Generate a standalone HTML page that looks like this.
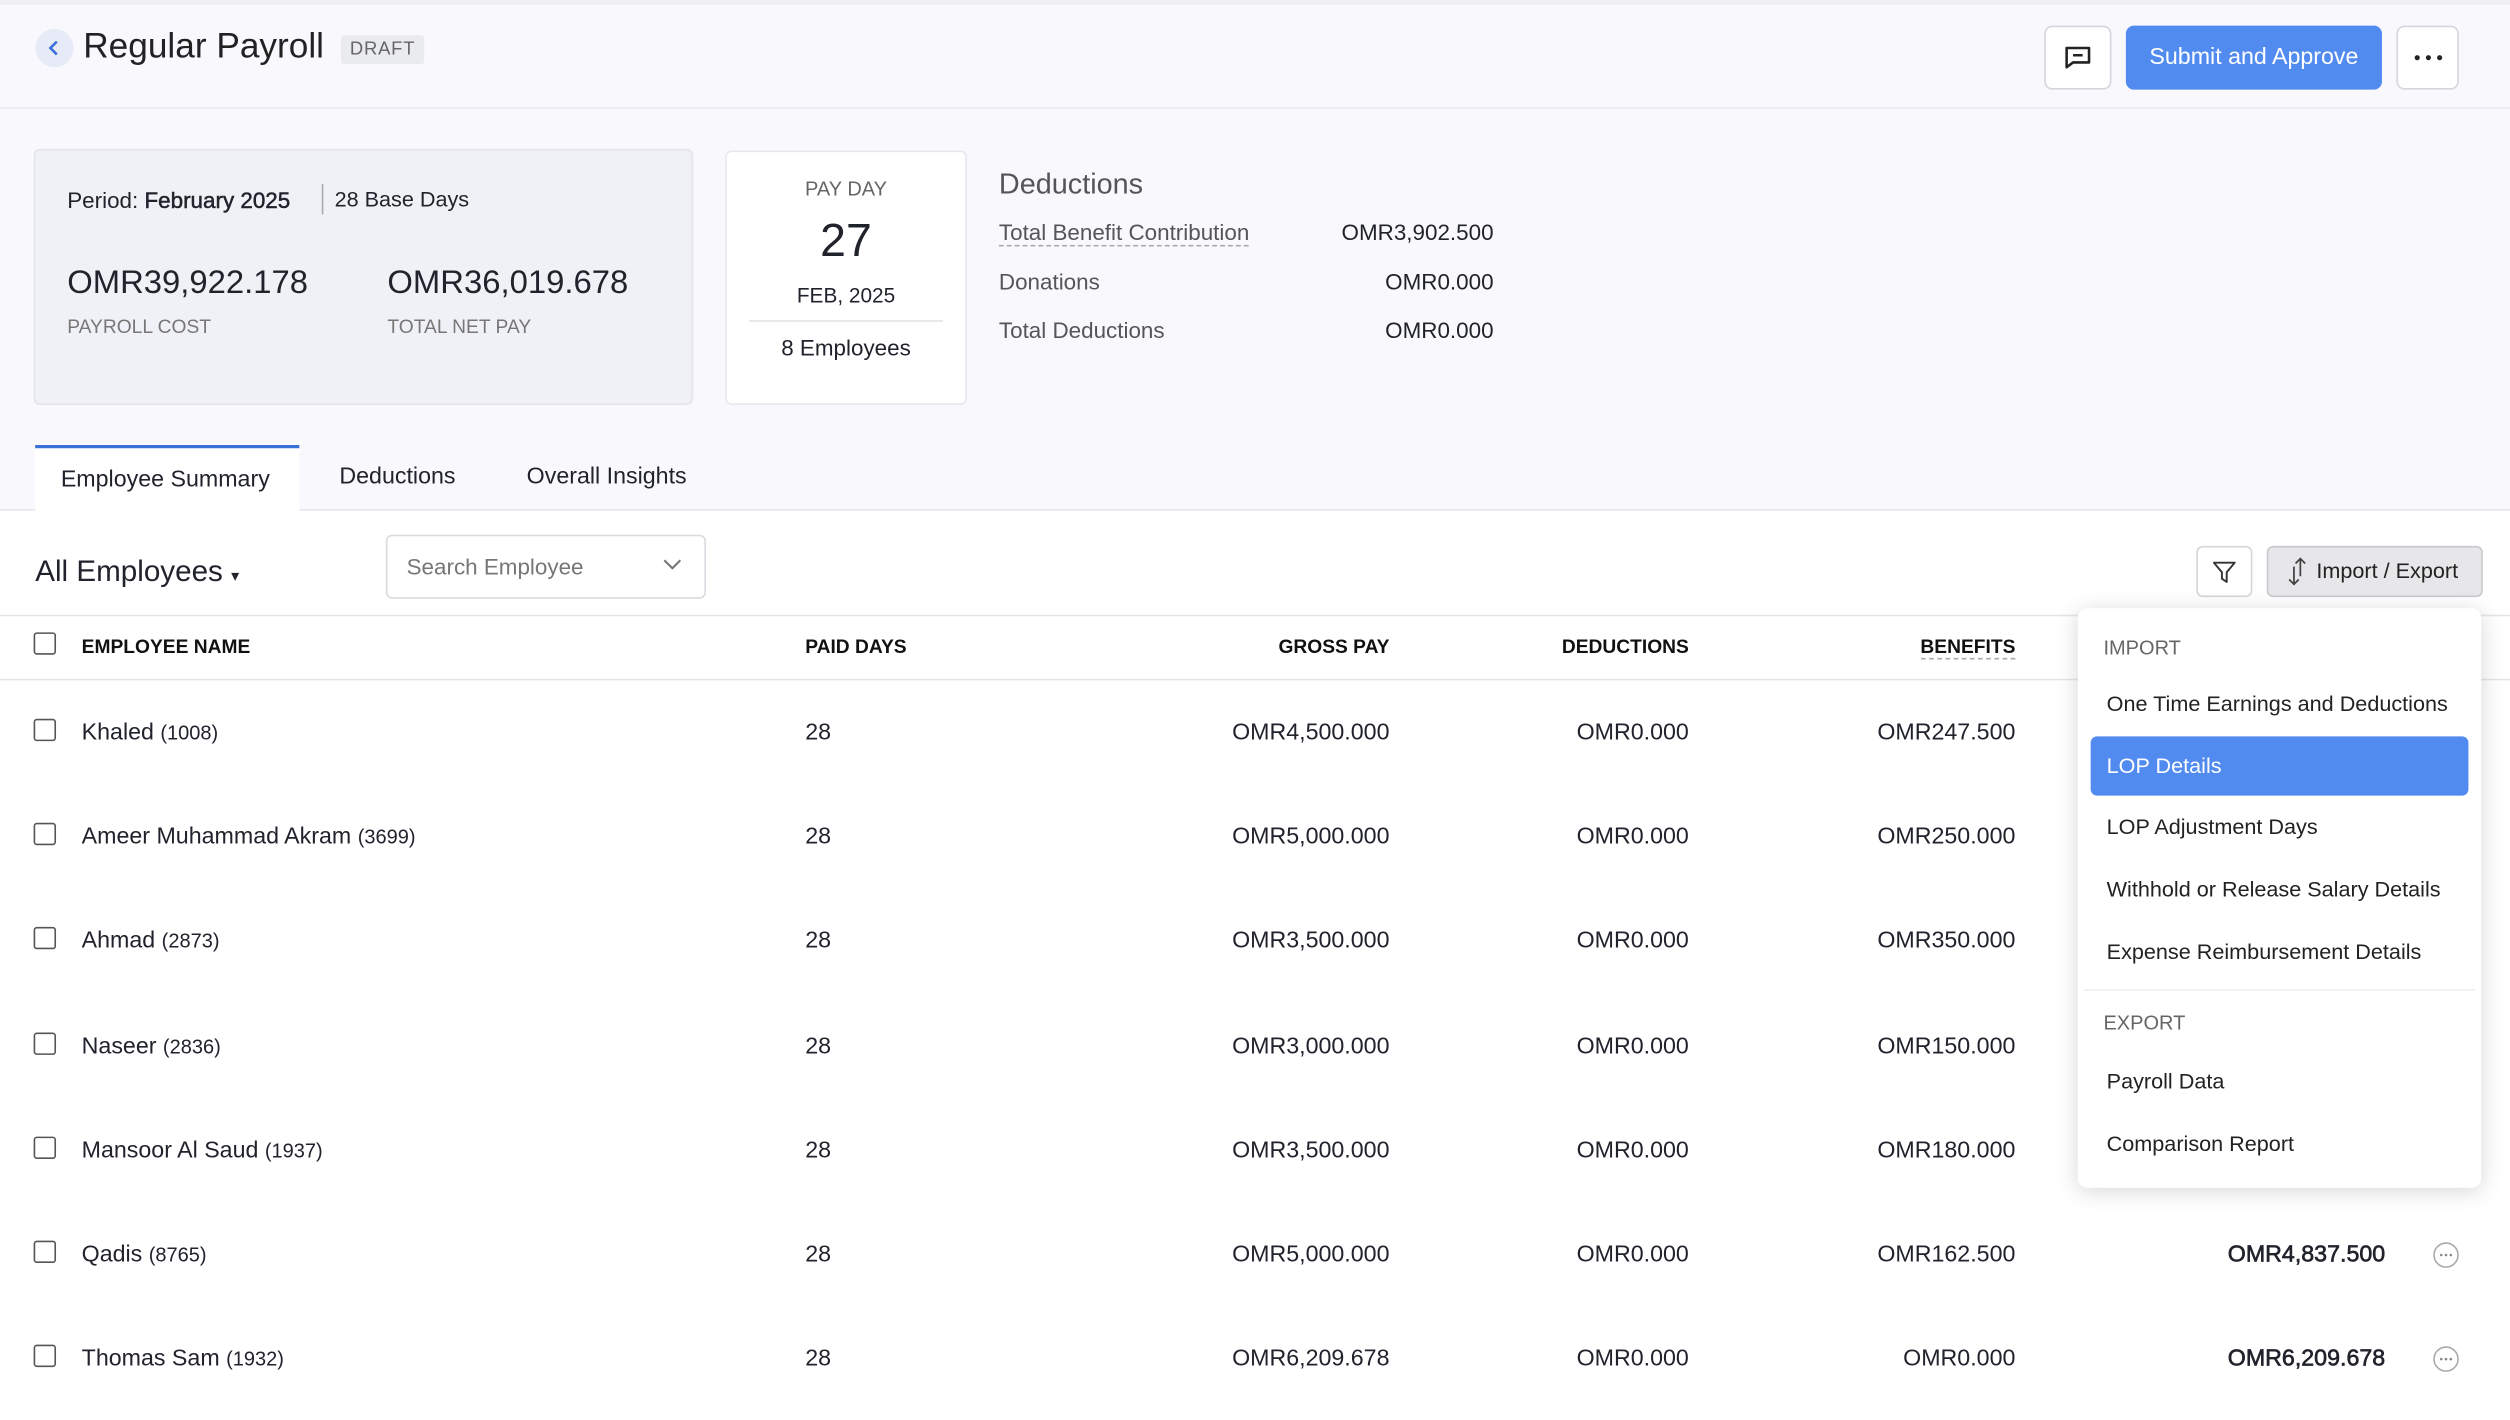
<!DOCTYPE html>
<html><head><meta charset="utf-8"><style>
*{margin:0;padding:0;box-sizing:border-box}
html,body{width:2510px;height:1420px;overflow:hidden;background:#fff}
#w{position:absolute;left:0;top:0;width:1568px;height:887px;transform:scale(1.6008);transform-origin:0 0;font-family:"Liberation Sans",sans-serif;color:#21232c;background:#fff}
.a{position:absolute;white-space:nowrap}
.r{text-align:right}
.cb{position:absolute;width:14px;height:14px;border:1.3px solid #555;border-radius:2px;background:#fff}
.n{font-size:14.5px}
.n small{font-size:12.5px}
.hd{font-size:12px;font-weight:bold;color:#111}
.mi{position:absolute;left:1316px;font-size:13.5px;color:#222}
</style></head><body><div id="w">
<div class="a" style="left:0;top:0;width:1568px;height:319px;background:#f9f9fd"></div>
<div class="a" style="left:0;top:0;width:1568px;height:3px;background:#eef0f4"></div>
<div class="a" style="left:0;top:67px;width:1568px;height:1px;background:#e8e9ef"></div>
<div class="a" style="left:22px;top:18px;width:24px;height:24px;border-radius:12px;background:#e6ebf7"></div>
<svg class="a" style="left:28px;top:24px" width="12" height="12"><path d="M7.5 2L3.5 6l4 4" fill="none" stroke="#3b6fd8" stroke-width="1.6"/></svg>
<div class="a" style="left:52px;top:16px;font-size:22px;color:#222">Regular Payroll</div>
<div class="a" style="left:213px;top:22px;width:52px;height:18px;background:#eaebef;border-radius:2px;font-size:11.5px;color:#666;text-align:center;line-height:18px;letter-spacing:.5px">DRAFT</div>
<div class="a" style="left:1277px;top:16px;width:42px;height:40px;border:1px solid #d4d6dc;border-radius:5px;background:#fff"></div>
<svg class="a" style="left:1289px;top:28px" width="18" height="16" viewBox="0 0 18 16"><path d="M2 2h14v9H6l-4 3z" fill="none" stroke="#222" stroke-width="1.6" stroke-linejoin="round"/><path d="M6 6.5h6" stroke="#222" stroke-width="1.6"/></svg>
<div class="a" style="left:1328px;top:16px;width:160px;height:40px;background:#528bf0;border-radius:5px;color:#fff;font-size:14.5px;text-align:center;line-height:40px">Submit and Approve</div>
<div class="a" style="left:1497px;top:16px;width:39px;height:40px;border:1px solid #d4d6dc;border-radius:5px;background:#fff"></div>
<svg class="a" style="left:1508px;top:34px" width="18" height="4"><circle cx="2" cy="2" r="1.6" fill="#222"/><circle cx="9" cy="2" r="1.6" fill="#222"/><circle cx="16" cy="2" r="1.6" fill="#222"/></svg>

<div class="a" style="left:21px;top:93px;width:412px;height:160px;background:#f0f1f6;border:1px solid #e4e5ea;border-radius:4px"></div>
<div class="a" style="left:42px;top:117px;font-size:14px">Period: <span style="font-weight:normal;-webkit-text-stroke:.3px #21232c">February 2025</span></div>
<div class="a" style="left:201px;top:115px;width:1px;height:19px;background:#aaa"></div>
<div class="a" style="left:209px;top:117px;font-size:13.5px">28 Base Days</div>
<div class="a" style="left:42px;top:165px;font-size:20.5px">OMR39,922.178</div>
<div class="a" style="left:242px;top:165px;font-size:20.5px">OMR36,019.678</div>
<div class="a" style="left:42px;top:197px;font-size:12px;color:#777">PAYROLL COST</div>
<div class="a" style="left:242px;top:197px;font-size:12px;color:#777">TOTAL NET PAY</div>

<div class="a" style="left:453px;top:94px;width:151px;height:159px;background:#fff;border:1px solid #e7e8ed;border-radius:4px"></div>
<div class="a" style="left:453px;top:111px;width:151px;text-align:center;font-size:12.5px;color:#666">PAY DAY</div>
<div class="a" style="left:453px;top:135px;width:151px;text-align:center;font-size:29px">27</div>
<div class="a" style="left:453px;top:177px;width:151px;text-align:center;font-size:13px">FEB, 2025</div>
<div class="a" style="left:468px;top:200px;width:121px;height:1px;background:#e2e3e7"></div>
<div class="a" style="left:453px;top:209px;width:151px;text-align:center;font-size:14px">8 Employees</div>

<div class="a" style="left:624px;top:105px;font-size:18px;color:#555">Deductions</div>
<div class="a" style="left:624px;top:137px;font-size:14px;color:#555;border-bottom:1px dashed #aaa">Total Benefit Contribution</div>
<div class="a" style="left:624px;top:168px;font-size:14px;color:#555">Donations</div>
<div class="a" style="left:624px;top:198px;font-size:14px;color:#555">Total Deductions</div>
<div class="a r" style="left:780px;width:153px;top:137px;font-size:14px">OMR3,902.500</div>
<div class="a r" style="left:780px;width:153px;top:168px;font-size:14px">OMR0.000</div>
<div class="a r" style="left:780px;width:153px;top:198px;font-size:14px">OMR0.000</div>

<div class="a" style="left:0;top:318px;width:1568px;height:1px;background:#e5e6eb"></div>
<div class="a" style="left:22px;top:278px;width:165px;height:42px;background:#fff;border-top:2.5px solid #3b6fd8"></div>
<div class="a" style="left:38px;top:292px;font-size:14.5px">Employee Summary</div>
<div class="a" style="left:212px;top:290px;font-size:14.5px">Deductions</div>
<div class="a" style="left:329px;top:290px;font-size:14.5px">Overall Insights</div>

<div class="a" style="left:22px;top:346px;font-size:18.5px">All Employees <span style="font-size:10px">▾</span></div>
<div class="a" style="left:241px;top:334px;width:200px;height:40px;border:1px solid #d9dbe0;border-radius:4px"></div>
<div class="a" style="left:254px;top:346px;font-size:14px;color:#777">Search Employee</div>
<svg class="a" style="left:414px;top:349px" width="12" height="8"><path d="M1 1l5 5 5-5" fill="none" stroke="#777" stroke-width="1.3"/></svg>
<div class="a" style="left:1372px;top:341px;width:35px;height:32px;border:1px solid #d4d6dc;border-radius:4px"></div>
<svg class="a" style="left:1382px;top:350px" width="15" height="15"><path d="M1 1.5h13l-5 6v6l-3-2v-4z" fill="none" stroke="#333" stroke-width="1.2" stroke-linejoin="round"/></svg>
<div class="a" style="left:1416px;top:341px;width:135px;height:32px;border:1px solid #c8c9cd;border-radius:4px;background:#e7e7e9"></div>
<svg class="a" style="left:1428px;top:348px" width="14" height="18"><path d="M5 17V6M2 14l3 3 3-3M9 1v11M6 4l3-3 3 3" fill="none" stroke="#444" stroke-width="1.1"/></svg>
<div class="a" style="left:1447px;top:349px;font-size:13.5px;color:#222">Import / Export</div>

<div class="a" style="left:0;top:384px;width:1568px;height:1px;background:#e5e6eb"></div>
<div class="a" style="left:0;top:424px;width:1568px;height:1px;background:#e5e6eb"></div>
<div class="cb" style="left:21px;top:395px"></div>
<div class="a hd" style="left:51px;top:397px">EMPLOYEE NAME</div>
<div class="a hd" style="left:503px;top:397px">PAID DAYS</div>
<div class="a hd r" style="left:700px;width:168px;top:397px">GROSS PAY</div>
<div class="a hd r" style="left:900px;width:155px;top:397px">DEDUCTIONS</div>
<div class="a hd r" style="left:1100px;width:159px;top:397px;"><span style="border-bottom:1px dashed #aaa">BENEFITS</span></div>

<div class="cb" style="left:21px;top:449px"></div><div class="a n" style="left:51px;top:450px">Khaled <small>(1008)</small></div><div class="a n" style="left:503px;top:450px">28</div><div class="a n r" style="left:700px;width:168px;top:450px">OMR4,500.000</div><div class="a n r" style="left:900px;width:155px;top:450px">OMR0.000</div><div class="a n r" style="left:1100px;width:159px;top:450px">OMR247.500</div>
<div class="cb" style="left:21px;top:514px"></div><div class="a n" style="left:51px;top:515px">Ameer Muhammad Akram <small>(3699)</small></div><div class="a n" style="left:503px;top:515px">28</div><div class="a n r" style="left:700px;width:168px;top:515px">OMR5,000.000</div><div class="a n r" style="left:900px;width:155px;top:515px">OMR0.000</div><div class="a n r" style="left:1100px;width:159px;top:515px">OMR250.000</div>
<div class="cb" style="left:21px;top:579px"></div><div class="a n" style="left:51px;top:580px">Ahmad <small>(2873)</small></div><div class="a n" style="left:503px;top:580px">28</div><div class="a n r" style="left:700px;width:168px;top:580px">OMR3,500.000</div><div class="a n r" style="left:900px;width:155px;top:580px">OMR0.000</div><div class="a n r" style="left:1100px;width:159px;top:580px">OMR350.000</div>
<div class="cb" style="left:21px;top:645px"></div><div class="a n" style="left:51px;top:646px">Naseer <small>(2836)</small></div><div class="a n" style="left:503px;top:646px">28</div><div class="a n r" style="left:700px;width:168px;top:646px">OMR3,000.000</div><div class="a n r" style="left:900px;width:155px;top:646px">OMR0.000</div><div class="a n r" style="left:1100px;width:159px;top:646px">OMR150.000</div>
<div class="cb" style="left:21px;top:710px"></div><div class="a n" style="left:51px;top:711px">Mansoor Al Saud <small>(1937)</small></div><div class="a n" style="left:503px;top:711px">28</div><div class="a n r" style="left:700px;width:168px;top:711px">OMR3,500.000</div><div class="a n r" style="left:900px;width:155px;top:711px">OMR0.000</div><div class="a n r" style="left:1100px;width:159px;top:711px">OMR180.000</div>
<div class="cb" style="left:21px;top:775px"></div><div class="a n" style="left:51px;top:776px">Qadis <small>(8765)</small></div><div class="a n" style="left:503px;top:776px">28</div><div class="a n r" style="left:700px;width:168px;top:776px">OMR5,000.000</div><div class="a n r" style="left:900px;width:155px;top:776px">OMR0.000</div><div class="a n r" style="left:1100px;width:159px;top:776px">OMR162.500</div>
<div class="a n r" style="left:1300px;width:190px;top:776px;-webkit-text-stroke:.4px #21232c">OMR4,837.500</div>
<svg class="a" style="left:1519px;top:775px" width="18" height="18"><circle cx="9" cy="9" r="7.5" fill="none" stroke="#aaa"/><circle cx="6" cy="9" r=".8" fill="#888"/><circle cx="9" cy="9" r=".8" fill="#888"/><circle cx="12" cy="9" r=".8" fill="#888"/></svg>
<div class="cb" style="left:21px;top:840px"></div><div class="a n" style="left:51px;top:841px">Thomas Sam <small>(1932)</small></div><div class="a n" style="left:503px;top:841px">28</div><div class="a n r" style="left:700px;width:168px;top:841px">OMR6,209.678</div><div class="a n r" style="left:900px;width:155px;top:841px">OMR0.000</div><div class="a n r" style="left:1100px;width:159px;top:841px">OMR0.000</div>
<div class="a n r" style="left:1300px;width:190px;top:841px;-webkit-text-stroke:.4px #21232c">OMR6,209.678</div>
<svg class="a" style="left:1519px;top:840px" width="18" height="18"><circle cx="9" cy="9" r="7.5" fill="none" stroke="#aaa"/><circle cx="6" cy="9" r=".8" fill="#888"/><circle cx="9" cy="9" r=".8" fill="#888"/><circle cx="12" cy="9" r=".8" fill="#888"/></svg>

<div class="a" style="left:1298px;top:380px;width:252px;height:362px;background:#fff;border-radius:6px;box-shadow:0 2px 14px rgba(0,0,0,.16)"></div>
<div class="a" style="left:1314px;top:398px;font-size:12.5px;color:#666">IMPORT</div>
<div class="mi" style="top:432px">One Time Earnings and Deductions</div>
<div class="a" style="left:1306px;top:460px;width:236px;height:37px;background:#528bf0;border-radius:4px"></div>
<div class="mi" style="top:471px;color:#fff">LOP Details</div>
<div class="mi" style="top:509px">LOP Adjustment Days</div>
<div class="mi" style="top:548px">Withhold or Release Salary Details</div>
<div class="mi" style="top:587px">Expense Reimbursement Details</div>
<div class="a" style="left:1302px;top:618px;width:244px;height:1px;background:#eee"></div>
<div class="a" style="left:1314px;top:632px;font-size:12.5px;color:#666">EXPORT</div>
<div class="mi" style="top:668px">Payroll Data</div>
<div class="mi" style="top:707px">Comparison Report</div>
</div></body></html>
